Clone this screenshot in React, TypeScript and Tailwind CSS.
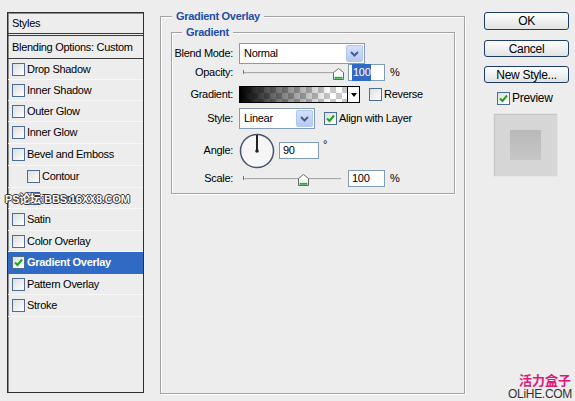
import React from "react";

const font = "font-['Liberation_Sans',Arial,sans-serif]";

const styleItems = [
  { label: "Drop Shadow", h: "h-[21px]" },
  { label: "Inner Shadow", h: "h-[21px]" },
  { label: "Outer Glow", h: "h-[21px]" },
  { label: "Inner Glow", h: "h-[22px]" },
  { label: "Bevel and Emboss", h: "h-[22px]" },
  { label: "Contour", h: "h-[22px]", sub: true },
  { label: "Texture", h: "h-[21px]", sub: true },
  { label: "Satin", h: "h-[22px]" },
  { label: "Color Overlay", h: "h-[21px]" },
  { label: "Gradient Overlay", h: "h-[22px]", active: true },
  { label: "Pattern Overlay", h: "h-[21px]" },
  { label: "Stroke", h: "h-[22px]" },
];

function Check({ checked = false }: { checked?: boolean }) {
  return (
    <span className="w-[13px] h-[13px] shrink-0 border border-[#4d6d99] bg-gradient-to-br from-[#dedede] to-white flex items-center justify-center">
      {checked && (
        <svg width="9" height="9" viewBox="0 0 9 9">
          <path d="M1 4.5 L3.5 7 L8 1.5" fill="none" stroke="#22a31f" strokeWidth="2" />
        </svg>
      )}
    </span>
  );
}

function Chevron() {
  return (
    <span className="w-[17px] h-full rounded-[2px] border border-[#b3c7ef] bg-gradient-to-b from-[#d3e0fc] to-[#b4c9f5] flex items-center justify-center">
      <svg width="9" height="6" viewBox="0 0 9 6">
        <path d="M1 1 L4.5 4.5 L8 1" fill="none" stroke="#4b5f86" strokeWidth="2" />
      </svg>
    </span>
  );
}

function Select({ value, w }: { value: string; w: string }) {
  return (
    <div className={`${w} h-[21px] border border-[#7f9db9] bg-white flex items-center p-[1px]`}>
      <span className="flex-1 pl-[3px] text-[11px] text-black">{value}</span>
      <Chevron />
    </div>
  );
}

function Slider({ pos }: { pos: string }) {
  return (
    <div className="w-[105px] h-full relative">
      <div className="absolute left-[4px] top-[8px] w-[98px] h-[2px] border-t border-[#a8a8a8] border-b-white bg-[#e4e4e4]" />
      <div className="absolute left-[4px] top-[6px] w-[1px] h-[4px] bg-[#7a7a7a]" />
      <svg className={`absolute top-[4px] ${pos}`} width="11" height="12" viewBox="0 0 11 12">
        <path d="M5.5 0.5 L10.5 4.5 V11.5 H0.5 V4.5 Z" fill="#fff" stroke="#6a6a6a" />
        <path d="M1.5 9.8 H9.5" stroke="#2faa47" strokeWidth="2" />
      </svg>
    </div>
  );
}

function Field({ w, children }: { w: string; children: React.ReactNode }) {
  return (
    <div className={`${w} h-[17px] border border-[#7f9db9] bg-white flex items-center pl-[3px] text-[11px] text-black`}>
      {children}
    </div>
  );
}

function Button({ label, h }: { label: string; h: string }) {
  return (
    <div className={`w-[85px] ${h} rounded-[3px] border border-[#1d3c6b] bg-gradient-to-b from-white to-[#e2e2e2] flex items-center justify-center text-[12px] text-black`}>
      {label}
    </div>
  );
}

function Label({ children }: { children: React.ReactNode }) {
  return <span className="w-[61px] text-right text-[11px] text-black shrink-0">{children}</span>;
}

export default function App() {
  return (
    <div className={`${font} w-[575px] h-[401px] bg-[#ededed] relative overflow-hidden flex items-start tracking-[-0.3px]`}>
      {/* styles list */}
      <div className="ml-[7px] mt-[12px] w-[137px] h-[381px] border border-[#2f2f2f] shadow-[inset_1px_1px_0_#8c8c8c] flex flex-col">
        <div className="h-[20px] flex items-center pl-[4px] text-[11px] text-black">Styles</div>
        <div className="h-[3px] border-y border-[#3a3a3a]" />
        <div className="h-[23px] flex items-center pl-[4px] text-[11px] text-black border-b border-[#3a3a3a]">
          Blending Options: Custom
        </div>
        {styleItems.map((it) => (
          <div
            key={it.label}
            className={`${it.h} flex items-center gap-[2px] border-b ${
              it.active ? "bg-[#316ac5] border-[#316ac5] text-white font-bold" : "border-[#f8f8f8] text-black"
            } ${it.sub ? "pl-[19px]" : "pl-[4px]"} text-[11px]`}
          >
            <Check checked={it.active} />
            <span>{it.label}</span>
          </div>
        ))}
      </div>

      {/* gradient overlay group */}
      <div className="ml-[16px] mt-[16px] w-[305px] h-[378px] relative border border-[#a3a3a3] shadow-[inset_1px_1px_0_#fff,1px_1px_0_#fff]">
        <span className="absolute left-[11px] top-[-8px] px-[4px] bg-[#ededed] text-[11px] leading-[14px] font-bold text-[#1f4dab]">
          Gradient Overlay
        </span>
        <div className="ml-[10px] mt-[15px] w-[284px] h-[162px] relative border border-[#a3a3a3] shadow-[inset_1px_1px_0_#fff,1px_1px_0_#fff] flex flex-col pt-[10px]">
          <span className="absolute left-[10px] top-[-8px] px-[4px] bg-[#ededed] text-[11px] leading-[14px] font-bold text-[#1f4dab]">
            Gradient
          </span>

          <div className="h-[21px] flex items-center">
            <Label>Blend Mode:</Label>
            <div className="ml-[6px]">
              <Select value="Normal" w="w-[126px]" />
            </div>
          </div>

          <div className="h-[17px] flex items-center">
            <Label>Opacity:</Label>
            <div className="ml-[6px] h-full flex items-center">
              <Slider pos="left-[94px]" />
              <div className="ml-[4px]">
                <Field w="w-[37px]">
                  <span className="bg-[#316ac5] text-white px-[1px]">100</span>
                </Field>
              </div>
              <span className="ml-[5px] text-[11px] text-black">%</span>
            </div>
          </div>

          <div className="mt-[5px] h-[17px] flex items-center">
            <Label>Gradient:</Label>
            <div className="ml-[6px] w-[121px] h-[17px] border border-black flex">
              <div className="flex-1 bg-[linear-gradient(to_right,#000,rgba(0,0,0,0.55)_35%,rgba(0,0,0,0)_85%),repeating-conic-gradient(#c8c8c8_0_25%,#fff_0_50%)] bg-[length:100%_100%,12px_12px]" />
              <div className="w-[12px] border-l border-black bg-white flex items-center justify-center">
                <svg width="6" height="4" viewBox="0 0 6 4">
                  <path d="M0 0 H6 L3 4 Z" fill="#000" />
                </svg>
              </div>
            </div>
            <div className="ml-[9px] flex items-center gap-[2px] text-[11px] text-black">
              <Check />
              <span>Reverse</span>
            </div>
          </div>

          <div className="mt-[5px] h-[21px] flex items-center">
            <Label>Style:</Label>
            <div className="ml-[6px]">
              <Select value="Linear" w="w-[76px]" />
            </div>
            <div className="ml-[9px] flex items-center gap-[2px] text-[11px] text-black">
              <Check checked />
              <span>Align with Layer</span>
            </div>
          </div>

          <div className="mt-[4px] h-[35px] flex items-center">
            <Label>Angle:</Label>
            <svg className="ml-[6px]" width="36" height="36" viewBox="0 0 36 36">
              <circle cx="18" cy="18" r="16.5" fill="#f6f6f6" stroke="#46546f" strokeWidth="1.5" />
              <path d="M18 18 V2" stroke="#222" strokeWidth="2" />
              <circle cx="18" cy="18" r="1.8" fill="#222" />
            </svg>
            <div className="ml-[4px]">
              <Field w="w-[40px]">90</Field>
            </div>
            <span className="ml-[4px] self-start mt-[6px] text-[11px] text-black leading-none">°</span>
          </div>

          <div className="mt-[2px] h-[17px] flex items-center">
            <Label>Scale:</Label>
            <div className="ml-[6px] h-full flex items-center">
              <Slider pos="left-[59px]" />
              <div className="ml-[4px]">
                <Field w="w-[37px]">100</Field>
              </div>
              <span className="ml-[5px] text-[11px] text-black">%</span>
            </div>
          </div>
        </div>
      </div>

      {/* buttons */}
      <div className="ml-[19px] mt-[12px] w-[85px] flex flex-col">
        <Button label="OK" h="h-[18px]" />
        <div className="mt-[10px]">
          <Button label="Cancel" h="h-[17px]" />
        </div>
        <div className="mt-[9px]">
          <Button label="New Style..." h="h-[17px]" />
        </div>
        <div className="mt-[8px] h-[14px] pl-[13px] flex items-center gap-[2px] text-[12px] text-black">
          <Check checked />
          <span>Preview</span>
        </div>
        <div className="mt-[8px] ml-[9px] w-[65px] h-[64px] bg-[#d6d6d6] border border-[#e6e6e6] shadow-[inset_1px_1px_0_#c4c4c4] flex items-center justify-center">
          <div className="w-[31px] h-[30px] bg-gradient-to-b from-[#b9b9b9] to-[#c6c6c6]" />
        </div>
      </div>

      {/* watermarks */}
      <span className="absolute left-[5px] top-[191px] text-[11px] font-bold text-white tracking-[-0.2px] font-['Liberation_Sans','Noto_Sans_CJK_SC',sans-serif] [text-shadow:1px_0_#333,-1px_0_#333,0_1px_#333,0_-1px_#333]">
        PS论坛:BBS.16XX8.COM
      </span>
      <span className="absolute right-[4px] top-[373px] text-[13px] font-bold text-[#e0187a] font-['Noto_Sans_CJK_SC',sans-serif] leading-[13px] tracking-normal">
        活力盒子
      </span>
      <span className="absolute right-[3px] top-[388px] text-[12px] text-[#333] leading-[12px] tracking-[-0.3px]">
        OLiHE.COM
      </span>
    </div>
  );
}
